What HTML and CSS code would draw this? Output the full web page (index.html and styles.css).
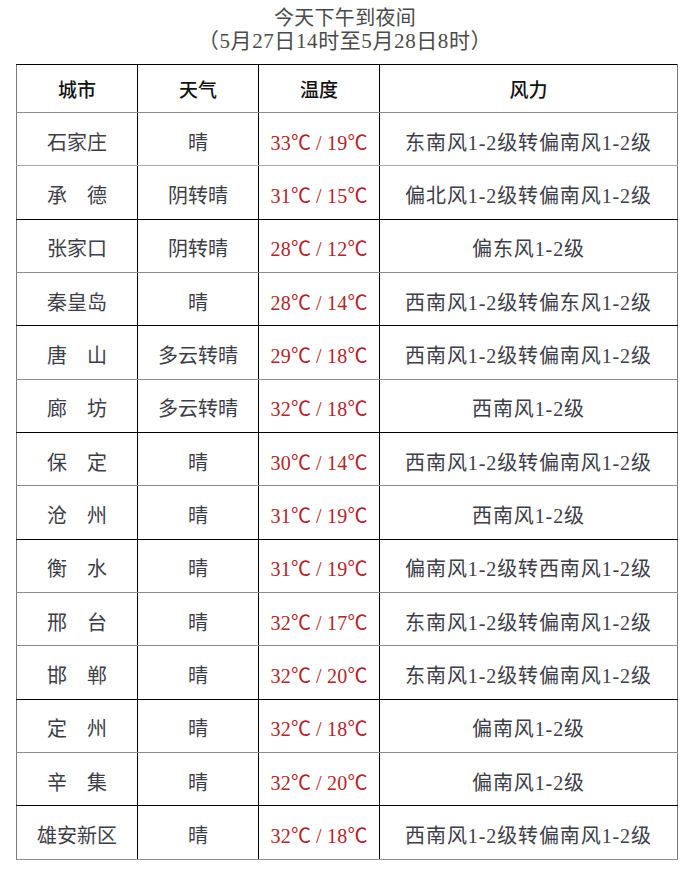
FILE: index.html
```html
<!DOCTYPE html>
<html lang="zh-CN">
<head>
<meta charset="utf-8">
<title>今天下午到夜间</title>
<link rel="stylesheet" href="styles.css">
</head>
<body>
<div class="page">
  <header class="title">
    <div class="title-line">今天下午到夜间</div>
    <div class="title-line"><span class="cj">（</span>5月27日14时至5月28日8时<span class="cj">）</span></div>
  </header>
  <table class="weather">
    <colgroup>
      <col class="c-city"><col class="c-wx"><col class="c-temp"><col class="c-wind">
    </colgroup>
    <thead>
      <tr class="head"><th>城市</th><th>天气</th><th>温度</th><th>风力</th></tr>
    </thead>
    <tbody>
      <tr class="lt"><td>石家庄</td><td>晴</td><td class="t">33<span class="cj">℃</span><span class="sl">/</span>19<span class="cj">℃</span></td><td class="w">东南风1-2级转偏南风1-2级</td></tr>
      <tr class="dk"><td>承　德</td><td>阴转晴</td><td class="t">31<span class="cj">℃</span><span class="sl">/</span>15<span class="cj">℃</span></td><td class="w">偏北风1-2级转偏南风1-2级</td></tr>
      <tr><td>张家口</td><td>阴转晴</td><td class="t">28<span class="cj">℃</span><span class="sl">/</span>12<span class="cj">℃</span></td><td class="w">偏东风1-2级</td></tr>
      <tr class="dk"><td>秦皇岛</td><td>晴</td><td class="t">28<span class="cj">℃</span><span class="sl">/</span>14<span class="cj">℃</span></td><td class="w">西南风1-2级转偏东风1-2级</td></tr>
      <tr><td>唐　山</td><td>多云转晴</td><td class="t">29<span class="cj">℃</span><span class="sl">/</span>18<span class="cj">℃</span></td><td class="w">西南风1-2级转偏南风1-2级</td></tr>
      <tr class="dk"><td>廊　坊</td><td>多云转晴</td><td class="t">32<span class="cj">℃</span><span class="sl">/</span>18<span class="cj">℃</span></td><td class="w">西南风1-2级</td></tr>
      <tr><td>保　定</td><td>晴</td><td class="t">30<span class="cj">℃</span><span class="sl">/</span>14<span class="cj">℃</span></td><td class="w">西南风1-2级转偏南风1-2级</td></tr>
      <tr class="dk"><td>沧　州</td><td>晴</td><td class="t">31<span class="cj">℃</span><span class="sl">/</span>19<span class="cj">℃</span></td><td class="w">西南风1-2级</td></tr>
      <tr><td>衡　水</td><td>晴</td><td class="t">31<span class="cj">℃</span><span class="sl">/</span>19<span class="cj">℃</span></td><td class="w">偏南风1-2级转西南风1-2级</td></tr>
      <tr><td>邢　台</td><td>晴</td><td class="t">32<span class="cj">℃</span><span class="sl">/</span>17<span class="cj">℃</span></td><td class="w">东南风1-2级转偏南风1-2级</td></tr>
      <tr class="dk"><td>邯　郸</td><td>晴</td><td class="t">32<span class="cj">℃</span><span class="sl">/</span>20<span class="cj">℃</span></td><td class="w">东南风1-2级转偏南风1-2级</td></tr>
      <tr><td>定　州</td><td>晴</td><td class="t">32<span class="cj">℃</span><span class="sl">/</span>18<span class="cj">℃</span></td><td class="w">偏南风1-2级</td></tr>
      <tr class="dk"><td>辛　集</td><td>晴</td><td class="t">32<span class="cj">℃</span><span class="sl">/</span>20<span class="cj">℃</span></td><td class="w">偏南风1-2级</td></tr>
      <tr><td>雄安新区</td><td>晴</td><td class="t">32<span class="cj">℃</span><span class="sl">/</span>18<span class="cj">℃</span></td><td class="w">西南风1-2级转偏南风1-2级</td></tr>
    </tbody>
  </table>
</div>
</body>
</html>
```

FILE: styles.css
```css
html, body {
  margin: 0;
  padding: 0;
  background: #ffffff;
}

body {
  font-family: "Liberation Serif", "Noto Sans CJK SC", serif;
  color: #3d3d48;
}

.page {
  width: 690px;
  height: 892px;
  overflow: hidden;
}

.cj {
  font-family: "Noto Sans CJK SC", sans-serif;
}

.title {
  padding-top: 8px;
  text-align: center;
  color: #4a4a4a;
  font-size: 20px;
  line-height: 21px;
}

.title-line {
  white-space: nowrap;
  letter-spacing: 0.3px;
}

.title-line + .title-line {
  font-size: 21px;
  letter-spacing: 0.6px;
}

.weather {
  margin: 12px 0 0 16px;
  width: 661px;
  table-layout: fixed;
  border-collapse: collapse;
  font-size: 20px;
}

.c-city, .c-wx, .c-temp { width: 121px; }
.c-wind { width: 298px; }

.weather th,
.weather td {
  padding: 0;
  text-align: center;
  vertical-align: middle;
  white-space: nowrap;
  border-left: 1px solid #000;
  border-right: 1px solid #000;
  border-bottom: 1px solid #8c8c8c;
}

.weather th:first-child,
.weather td:first-child {
  border-left-color: #7a7a7a;
}

.weather th:last-child,
.weather td:last-child {
  border-right-color: #7a7a7a;
}

.weather th {
  border-top: 1px solid #000;
  font-weight: 500;
  color: #111;
  font-size: 19px;
}

.weather .head {
  height: 48px;
}

.weather tbody tr {
  height: 53.33px;
}

.weather tbody td {
  padding-top: 4px;
}

.weather tr.dk td {
  border-bottom-color: #000;
}

.weather tr.lt td {
  border-bottom-color: #a8a8a8;
}

.weather td.t {
  color: #b3242a;
  letter-spacing: 0.3px;
}

.weather td.t .cj {
  letter-spacing: 0;
}

.weather td.t .sl {
  display: inline-block;
  padding: 0 5px;
}

.weather td.w {
  letter-spacing: 0.9px;
}
```
